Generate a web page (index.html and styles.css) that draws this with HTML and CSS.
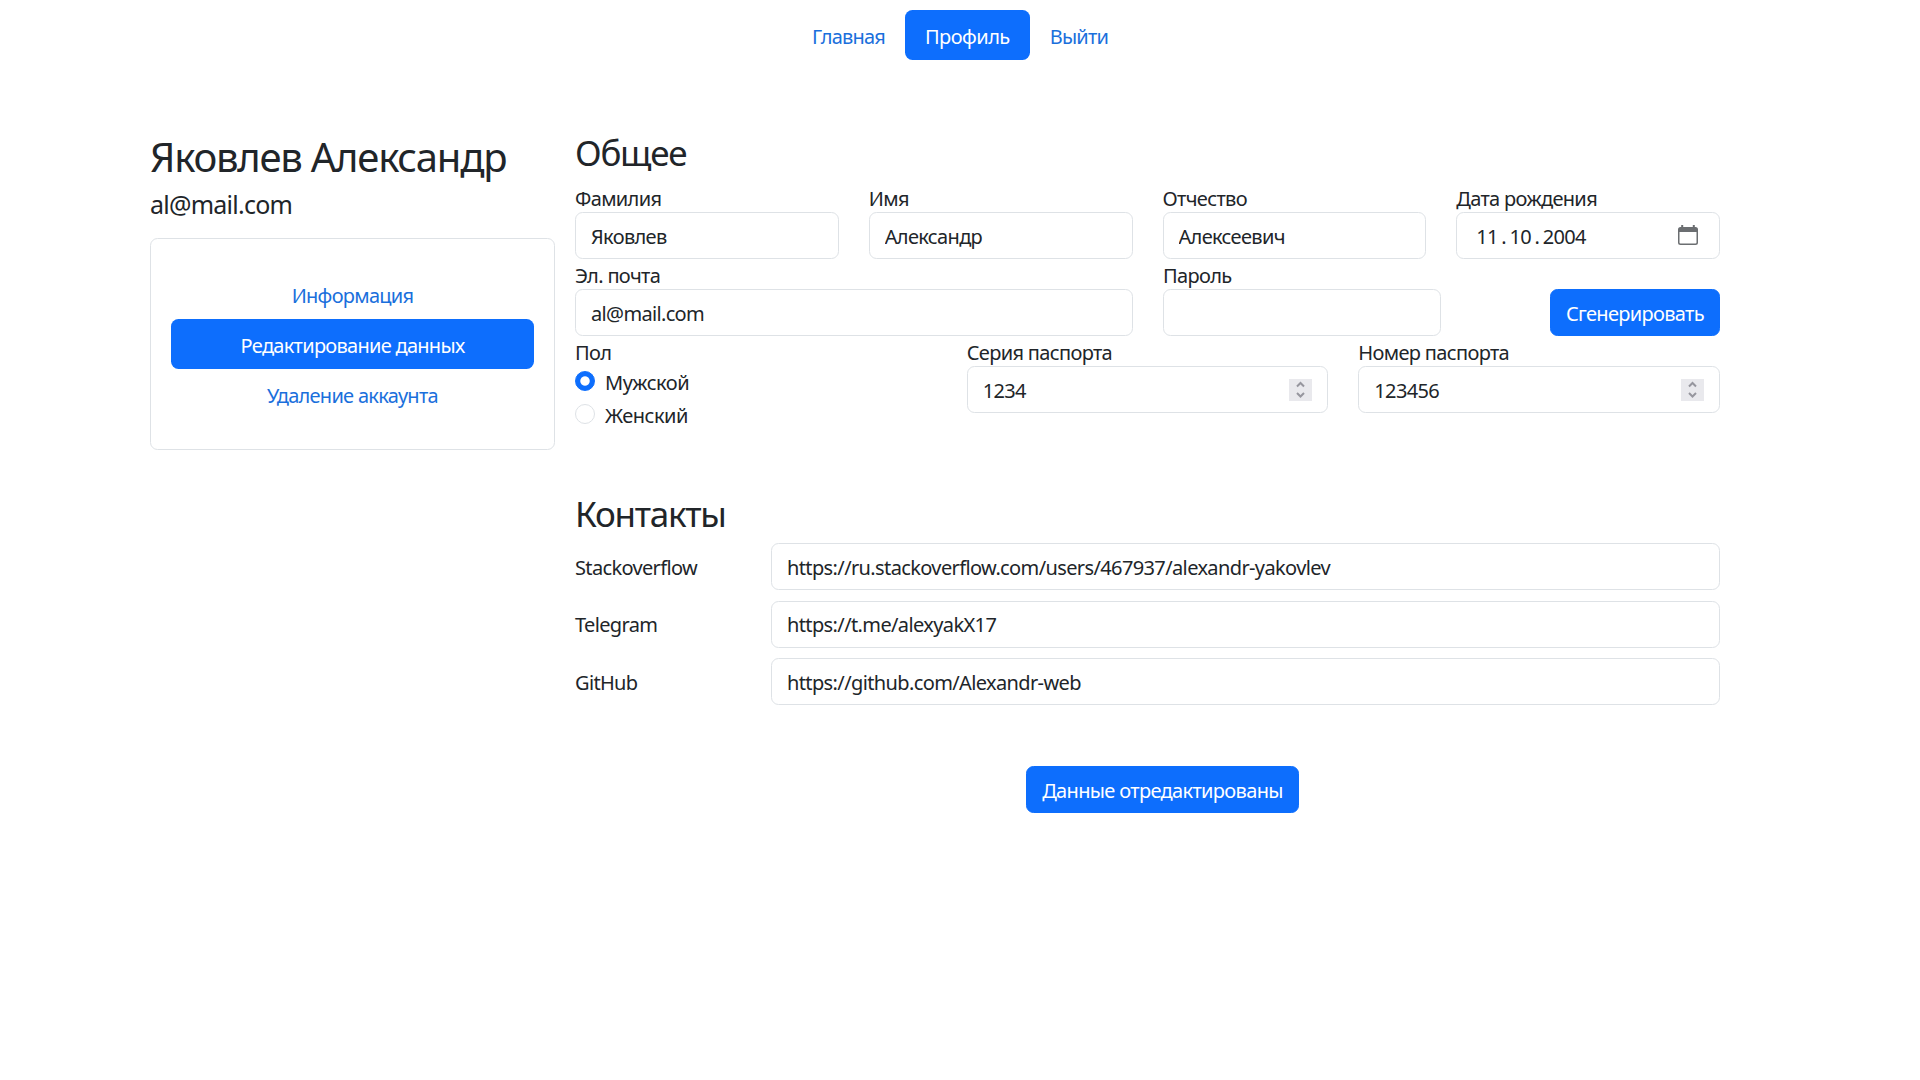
FILE: index.html
```html
<!DOCTYPE html>
<html lang="ru">
<head>
<meta charset="utf-8">
<title>Профиль</title>
<link rel="stylesheet" href="styles.css">
</head>
<body>
<nav class="topnav">
  <a class="link" href="#">Главная</a>
  <a class="link active" href="#">Профиль</a>
  <a class="link" href="#">Выйти</a>
</nav>
<main class="page">
  <aside class="sidebar">
    <h1 class="name">Яковлев Александр</h1>
    <p class="email">al@mail.com</p>
    <div class="card">
      <a class="link" href="#">Информация</a>
      <a class="link active" href="#">Редактирование данных</a>
      <a class="link" href="#">Удаление аккаунта</a>
    </div>
  </aside>
  <form class="form">
    <h2 class="title">Общее</h2>
    <div class="row four">
      <label class="field"><span class="label">Фамилия</span><input class="control" type="text" value="Яковлев"></label>
      <label class="field"><span class="label">Имя</span><input class="control" type="text" value="Александр"></label>
      <label class="field"><span class="label">Отчество</span><input class="control" type="text" value="Алексеевич"></label>
      <div class="field"><span class="label">Дата рождения</span>
        <div class="control date">
          <span class="parts"><span>11</span><span>.</span><span>10</span><span>.</span><span>2004</span></span>
          <svg class="calendar" viewBox="0 0 20 20"><path fill="#6b6e71" fill-rule="evenodd" d="M3.2 0h2v2h9.600V0h2v2h.7A2.500 2.500 0 0 1 20 4.500V17.500A2.500 2.500 0 0 1 17.500 20H2.500A2.500 2.500 0 0 1 0 17.500V4.500A2.500 2.500 0 0 1 2.500 2h.7zM1.500 7v10.500a1 1 0 0 0 1 1h15a1 1 0 0 0 1-1V7z"/></svg>
        </div>
      </div>
    </div>
    <div class="row two">
      <label class="field"><span class="label">Эл. почта</span><input class="control" type="text" value="al@mail.com"></label>
      <div class="password">
        <label class="field"><span class="label">Пароль</span><input class="control" type="password"></label>
        <button class="btn" type="button">Сгенерировать</button>
      </div>
    </div>
    <div class="row three">
      <div class="field"><span class="label">Пол</span>
        <label class="check"><input class="radio" type="radio" name="sex" checked>Мужской</label>
        <label class="check"><input class="radio" type="radio" name="sex">Женский</label>
      </div>
      <div class="field"><span class="label">Серия паспорта</span>
        <div class="control number"><span>1234</span>
          <svg class="spin" viewBox="0 0 23 22"><path d="M8 7.500 11.500 4 15 7.500M8 14 11.500 17.500 15 14"/></svg>
        </div>
      </div>
      <div class="field"><span class="label">Номер паспорта</span>
        <div class="control number"><span>123456</span>
          <svg class="spin" viewBox="0 0 23 22"><path d="M8 7.500 11.500 4 15 7.500M8 14 11.500 17.500 15 14"/></svg>
        </div>
      </div>
    </div>
    <h2 class="title contacts-title">Контакты</h2>
    <div class="contacts">
      <label class="contact"><span class="caption">Stackoverflow</span><input class="control" type="text" value="https://ru.stackoverflow.com/users/467937/alexandr-yakovlev"></label>
      <label class="contact"><span class="caption">Telegram</span><input class="control" type="text" value="https://t.me/alexyakX17"></label>
      <label class="contact"><span class="caption">GitHub</span><input class="control" type="text" value="https://github.com/Alexandr-web"></label>
    </div>
    <button class="btn submit" type="button">Данные отредактированы</button>
  </form>
</main>
</body>
</html>
```
FILE: styles.css
```css
* { box-sizing: border-box; }
body {
  margin: 0;
  background: #fff;
  color: #212529;
  font: 20px/30px "Noto Sans", sans-serif;
  letter-spacing: -0.033em;
}
h1, h2, p { margin: 0; font-weight: 400; }
input, button { font: inherit; letter-spacing: inherit; color: inherit; margin: 0; }

.topnav { display: flex; justify-content: center; padding-top: 10px; letter-spacing: -0.04em; }
.topnav .active { letter-spacing: -0.027em; }
.link {
  display: block;
  height: 50px;
  padding: 12px 20px 8px;
  border-radius: 7.5px;
  color: #1a6fdc;
  text-align: center;
  text-decoration: none;
}
.link.active { background: #0d6efd; color: #fff; }

.page {
  display: grid;
  grid-template-columns: 405px 1145px;
  column-gap: 20px;
  align-items: start;
  width: 1570px;
  margin: 70px auto 0 150px;
}
.name { font-size: 40px; line-height: 48px; padding: 3px 0 8px; letter-spacing: -0.031em; white-space: nowrap; }
.email { font-size: 25px; line-height: 30px; margin-bottom: 19px; letter-spacing: -0.03em; }
.card {
  height: 212px;
  padding: 30px 20px;
  border: 1px solid #dee2e6;
  border-radius: 7.5px;
}
.card .link { letter-spacing: -0.036em; }

.title { font-size: 35px; line-height: 42px; padding-top: 2px; margin-bottom: 8px; letter-spacing: -0.036em; }
.row { display: grid; column-gap: 30px; }
.four { grid-template-columns: repeat(4, 1fr); }
.two { grid-template-columns: 558px 557px; }
.three { grid-template-columns: repeat(3, 1fr); }
.field { display: block; min-width: 0; }
.label { display: block; height: 30px; line-height: 34px; }
.control {
  display: block;
  width: 100%;
  height: 47px;
  padding: 8px 15px 7px;
  border: 1px solid #dee2e6;
  border-radius: 7.5px;
  background: #fff;
  outline: none;
}
.date, .number { display: flex; justify-content: space-between; padding-top: 9px; padding-bottom: 6px; }
.date { padding-left: 19px; padding-right: 21px; }
.parts { display: flex; gap: 3.500px; }
.calendar { width: 20px; height: 20px; margin-top: 3px; }
.spin { width: 23px; height: 22px; margin-top: 3px; background: #e9e9ed; }
.spin path { fill: none; stroke: #96969e; stroke-width: 2; }

.password { display: flex; justify-content: space-between; align-items: flex-end; }
.password .field { width: 278px; }
.btn {
  height: 47px;
  padding: 8px 15px 6px;
  border: 1px solid #0d6efd;
  border-radius: 7.5px;
  background: #0d6efd;
  color: #fff;
  white-space: nowrap;
}
.check { display: flex; gap: 10px; height: 30px; line-height: 33px; margin-bottom: 2.500px; letter-spacing: -0.024em; }
.radio {
  appearance: none;
  width: 20px;
  height: 20px;
  margin-top: 5px;
  border: 1px solid #dee2e6;
  border-radius: 50%;
  background: #fff;
}
.radio:checked { border-color: #0d6efd; background: radial-gradient(circle, #fff 4.200px, #0d6efd 5.200px); }

.contacts-title { margin-top: 60px; }
.contacts { display: grid; row-gap: 10.500px; }
.contact { display: grid; grid-template-columns: 196px 949px; align-items: center; }
.caption { padding-top: 2px; }
.contact .control { letter-spacing: -0.031em; }
.submit { display: block; margin: 61px 0 0 451px; width: 273px; }
```
